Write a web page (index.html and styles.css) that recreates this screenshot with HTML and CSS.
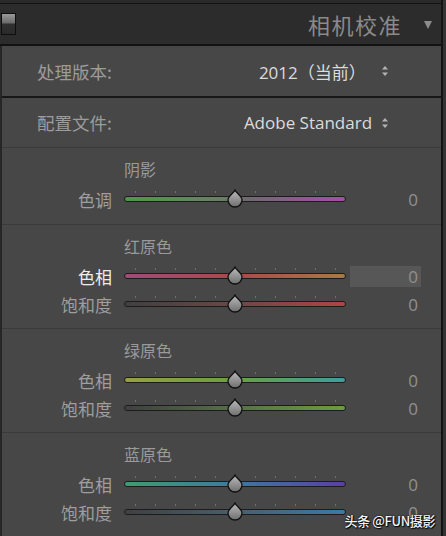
FILE: index.html
```html
<!DOCTYPE html>
<html lang="zh">
<head>
<meta charset="utf-8">
<link rel="stylesheet" href="styles.css">
</head>
<body>
<div class="app">
  <div class="topbar"></div>
  <div class="header">
    <span class="toggle"></span>
    <span class="title">相机校准</span>
    <span class="tri"></span>
  </div>
  <div class="panel">
    <div class="prow prow-version">
      <span class="plabel">处理版本:</span>
      <span class="pval pval-version">2012（当前）<svg class="updown" width="6" height="10" viewBox="0 0 6 10"><path d="M3 0 L6 3.5 L0 3.5 Z M3 10 L6 6.5 L0 6.5 Z" fill="#b4b4b4"/></svg></span>
    </div>
    <div class="prow prow-profile">
      <span class="plabel">配置文件:</span>
      <span class="pval pval-profile">Adobe Standard<svg class="updown" width="6" height="10" viewBox="0 0 6 10"><path d="M3 0 L6 3.5 L0 3.5 Z M3 10 L6 6.5 L0 6.5 Z" fill="#b4b4b4"/></svg></span>
    </div>

    <div class="section sec-shadow">
      <div class="stitle">阴影</div>
      <div class="srow">
        <span class="slabel">色调</span>
        <div class="track t-tint"><svg class="thumb" width="17" height="19" viewBox="0 0 17 19"><defs><linearGradient id="g1" x1="0" y1="0" x2="0" y2="1"><stop offset="0" stop-color="#bdbdbd"/><stop offset="1" stop-color="#6e6e6e"/></linearGradient></defs><path d="M8.5 1 C9.5 4 15.5 7 15.5 11 A7 7 0 1 1 1.5 11 C1.5 7 7.5 4 8.5 1 Z" fill="url(#g1)" stroke="#111" stroke-width="1.3"/></svg></div>
        <span class="sval">0</span>
      </div>
    </div>

    <div class="section">
      <div class="stitle">红原色</div>
      <div class="srow">
        <span class="slabel active">色相</span>
        <div class="track t-red-hue"><svg class="thumb" width="17" height="19" viewBox="0 0 17 19"><path d="M8.5 1 C9.5 4 15.5 7 15.5 11 A7 7 0 1 1 1.5 11 C1.5 7 7.5 4 8.5 1 Z" fill="url(#g1)" stroke="#111" stroke-width="1.3"/></svg></div>
        <span class="sval focused">0</span>
      </div>
      <div class="srow">
        <span class="slabel">饱和度</span>
        <div class="track t-red-sat"><svg class="thumb" width="17" height="19" viewBox="0 0 17 19"><path d="M8.5 1 C9.5 4 15.5 7 15.5 11 A7 7 0 1 1 1.5 11 C1.5 7 7.5 4 8.5 1 Z" fill="url(#g1)" stroke="#111" stroke-width="1.3"/></svg></div>
        <span class="sval">0</span>
      </div>
    </div>

    <div class="section">
      <div class="stitle">绿原色</div>
      <div class="srow">
        <span class="slabel">色相</span>
        <div class="track t-green-hue"><svg class="thumb" width="17" height="19" viewBox="0 0 17 19"><path d="M8.5 1 C9.5 4 15.5 7 15.5 11 A7 7 0 1 1 1.5 11 C1.5 7 7.5 4 8.5 1 Z" fill="url(#g1)" stroke="#111" stroke-width="1.3"/></svg></div>
        <span class="sval">0</span>
      </div>
      <div class="srow">
        <span class="slabel">饱和度</span>
        <div class="track t-green-sat"><svg class="thumb" width="17" height="19" viewBox="0 0 17 19"><path d="M8.5 1 C9.5 4 15.5 7 15.5 11 A7 7 0 1 1 1.5 11 C1.5 7 7.5 4 8.5 1 Z" fill="url(#g1)" stroke="#111" stroke-width="1.3"/></svg></div>
        <span class="sval">0</span>
      </div>
    </div>

    <div class="section">
      <div class="stitle">蓝原色</div>
      <div class="srow">
        <span class="slabel">色相</span>
        <div class="track t-blue-hue"><svg class="thumb" width="17" height="19" viewBox="0 0 17 19"><path d="M8.5 1 C9.5 4 15.5 7 15.5 11 A7 7 0 1 1 1.5 11 C1.5 7 7.5 4 8.5 1 Z" fill="url(#g1)" stroke="#111" stroke-width="1.3"/></svg></div>
        <span class="sval">0</span>
      </div>
      <div class="srow">
        <span class="slabel">饱和度</span>
        <div class="track t-blue-sat"><svg class="thumb" width="17" height="19" viewBox="0 0 17 19"><path d="M8.5 1 C9.5 4 15.5 7 15.5 11 A7 7 0 1 1 1.5 11 C1.5 7 7.5 4 8.5 1 Z" fill="url(#g1)" stroke="#111" stroke-width="1.3"/></svg></div>
        <span class="sval">0</span>
      </div>
    </div>
  </div>
  <div class="watermark">头条 @FUN摄影</div>
</div>
</body>
</html>
```

FILE: styles.css
```css
* { box-sizing: border-box; }
html, body {
  margin: 0;
  padding: 0;
  background: #343434;
  height: 536px;
  overflow: hidden;
}
body {
  font-family: "Noto Sans", "Noto Sans CJK SC", sans-serif;
}
.app {
  position: relative;
  width: 443px;
  height: 536px;
  border-right: 2px solid #141414;
  background: #2c2c2c;
}
.topbar {
  height: 4px;
  background: #2a2a2a;
  border-bottom: 1px solid #121212;
}
.header {
  height: 42px;
  display: flex;
  align-items: center;
  background: #2c2c2c;
  border-bottom: 2px solid #121212;
  padding-left: 1px;
}
.toggle {
  width: 15px;
  height: 22px;
  border: 1px solid #0e0e0e;
  background: linear-gradient(to bottom, #9a9a9a 0, #6a6a6a 45%, #303030 50%, #2a2a2a 100%);
}
.title {
  margin-left: auto;
  font-family: "Noto Sans CJK SC", sans-serif;
  font-size: 22px;
  letter-spacing: 1.5px;
  color: #8a8a8a;
  line-height: 1;
}
.tri {
  width: 0;
  height: 0;
  margin: 2px 9px 0 22px;
  border-left: 4.5px solid transparent;
  border-right: 4.5px solid transparent;
  border-top: 8px solid #8c8c8c;
}
.panel {
  background: #474747;
  border-left: 2px solid #262626;
  height: 490px;
}
.prow {
  display: flex;
  align-items: center;
  padding-left: 35px;
  height: 51px;
  font-size: 17px;
}
.prow-version {
  border-bottom: 2px solid #171717;
  height: 52px;
}
.prow-profile {
  height: 50px;
  border-bottom: 1px solid #3a3a3a;
}
.plabel {
  font-family: "Noto Sans CJK SC", sans-serif;
  font-size: 17.5px;
  color: #9c9c9c;
}
.pval {
  display: flex;
  align-items: center;
  color: #dcdcdc;
  font-family: "Open Sans", "Noto Sans CJK SC", sans-serif;
}
.pval-version { margin-left: 147px; }
.pval-version .updown { margin-left: 16px; }
.pval-profile { margin-left: 132px; font-size: 17px; }
.pval-profile .updown { margin-left: 10px; }
.updown { display: block; }
.section {
  padding: 10px 0 10px;
  border-bottom: 1px solid #3a3a3a;
}
.sec-shadow { padding-bottom: 11px; }
.stitle {
  height: 22px;
  line-height: 22px;
  padding-left: 122px;
  font-family: "Noto Sans CJK SC", sans-serif;
  font-size: 16px;
  color: #9a9a9a;
  margin-bottom: 5px;
}
.srow {
  display: grid;
  grid-template-columns: 122px 226px 71px;
  align-items: center;
  height: 28px;
}
.slabel {
  text-align: right;
  padding-right: 12px;
  font-family: "Noto Sans CJK SC", sans-serif;
  font-size: 17px;
  color: #9e9e9e;
  line-height: 1;
}
.slabel.active { color: #ececec; }
.sval {
  height: 21px;
  line-height: 21px;
  text-align: right;
  padding-right: 3px;
  font-family: "Open Sans", sans-serif;
  font-size: 17px;
  color: #909090;
}
.sval.focused { background: #575757; }
.track {
  position: relative;
  height: 6px;
  margin-right: 4px;
  border: 1px solid #1c1c1c;
  border-radius: 3px;
}
.track::before {
  content: "";
  position: absolute;
  left: 10px;
  top: -6px;
  width: 201px;
  height: 2px;
  background: repeating-linear-gradient(to right, #707070 0 1px, transparent 1px 20px);
}
.thumb {
  position: absolute;
  left: 50%;
  top: -8px;
  transform: translateX(-50%);
}
.t-tint { background: linear-gradient(to right, #4f9848, #6a7e66 45%, #6e6a70 55%, #a54ea6); }
.t-red-hue { background: linear-gradient(to right, #a04c78, #ac484c 50%, #a87a44); }
.t-red-sat { background: linear-gradient(to right, #404040, #6a4848 50%, #b04444); }
.t-green-hue { background: linear-gradient(to right, #98a040, #6aa040 50%, #3e9e9e); }
.t-green-sat { background: linear-gradient(to right, #404040, #567048 50%, #6c9e3e); }
.t-blue-hue { background: linear-gradient(to right, #3e9c70, #3c7aa0 50%, #5a3ea8); }
.t-blue-sat { background: linear-gradient(to right, #404040, #4a5e6a 50%, #3c7aa6); }
.watermark {
  position: absolute;
  right: 6px;
  bottom: 9px;
  font-family: "Noto Sans CJK SC", sans-serif;
  font-size: 13px;
  font-weight: 500;
  line-height: 1;
  color: #f4f4f4;
  text-shadow: 0 0 2px #000, 1px 1px 1px #000;
  letter-spacing: -0.4px;
}
```
